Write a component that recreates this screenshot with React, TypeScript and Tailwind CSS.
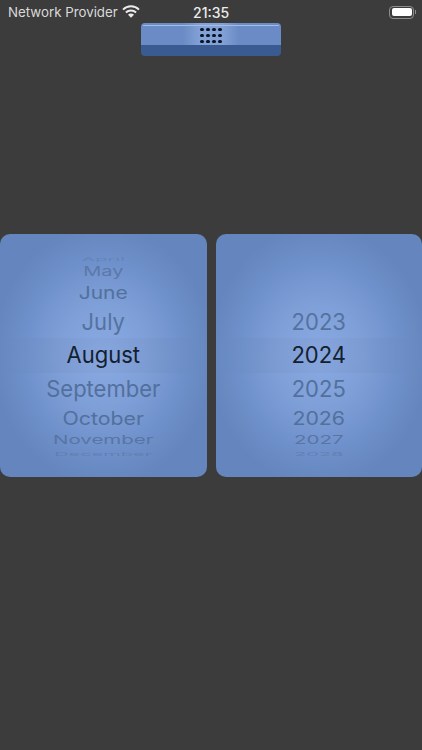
import React from "react";

function Row({ h, cls, children }: { h: string; cls: string; children: React.ReactNode }) {
  return (
    <div className={`${h} flex items-center justify-center overflow-hidden`}>
      <span className={`${cls} block leading-none whitespace-nowrap`}>{children}</span>
    </div>
  );
}

const glow =
  "bg-[radial-gradient(ellipse_110px_130px_at_center,#89aae2_0%,#7f9fd8_40%,#6f91cb_72%,#6485bd_100%)]";

function Wheel({ items }: { items: { h: string; cls: string; t: string }[] }) {
  return (
    <div className={`relative h-[243px] flex-1 rounded-[10px] ${glow} flex flex-col items-stretch pt-[21px]`}>
      <div className="absolute left-0 right-0 top-[104px] h-[35px] bg-[linear-gradient(90deg,transparent,rgba(0,0,0,0.025)_20%,rgba(0,0,0,0.025)_80%,transparent)]" />
      <div className="relative flex flex-col">
        {items.map((it, i) => (
          <Row key={i} h={it.h} cls={it.cls}>
            {it.t}
          </Row>
        ))}
      </div>
    </div>
  );
}

const months = [
  { h: "h-[7px]", cls: "text-[20px] scale-y-[0.25] text-[#55719f]/40", t: "April" },
  { h: "h-[17px]", cls: "text-[20px] scale-y-[0.66] text-[#55719f]/80", t: "May" },
  { h: "h-[26px]", cls: "text-[21px] scale-y-[0.82] text-[#52709c]", t: "June" },
  { h: "h-[33px]", cls: "text-[22px] scale-y-[1.03] text-[#55729f]", t: "July" },
  { h: "h-[34px]", cls: "text-[22px] scale-y-[1.03] text-[#14202f]", t: "August" },
  { h: "h-[34px]", cls: "text-[22px] scale-y-[1.03] text-[#52709c]", t: "September" },
  { h: "h-[25px]", cls: "text-[21.3px] scale-y-[0.85] text-[#52709c]", t: "October" },
  { h: "h-[19px]", cls: "text-[20.5px] scale-y-[0.58] text-[#55719f]/90", t: "November" },
  { h: "h-[7px]", cls: "text-[20px] scale-y-[0.25] text-[#55719f]/50", t: "December" },
];

const years = [
  { h: "h-[7px]", cls: "text-[22px] text-transparent", t: "" },
  { h: "h-[17px]", cls: "text-[18px] text-transparent", t: "" },
  { h: "h-[26px]", cls: "text-[20px] text-transparent", t: "" },
  { h: "h-[33px]", cls: "text-[22px] scale-y-[1.03] text-[#55729f]", t: "2023" },
  { h: "h-[34px]", cls: "text-[22px] scale-y-[1.03] text-[#14202f]", t: "2024" },
  { h: "h-[34px]", cls: "text-[22px] scale-y-[1.03] text-[#52709c]", t: "2025" },
  { h: "h-[25px]", cls: "text-[21.3px] scale-y-[0.85] text-[#52709c]", t: "2026" },
  { h: "h-[19px]", cls: "text-[20.5px] scale-y-[0.58] text-[#55719f]/90", t: "2027" },
  { h: "h-[7px]", cls: "text-[20px] scale-y-[0.25] text-[#55719f]/50", t: "2028" },
];

function Wifi() {
  return (
    <svg width="18" height="13" viewBox="0 0 18 13" fill="none" className="ml-[4px] mb-[1px]">
      <path d="M1 4.6 A11.5 11.5 0 0 1 17 4.6" stroke="#ebebeb" strokeWidth="2" />
      <path d="M3.9 7.5 A7.4 7.4 0 0 1 14.1 7.5" stroke="#ebebeb" strokeWidth="2" />
      <path d="M9 12.8 L6 9.7 A4.2 4.2 0 0 1 12 9.7 Z" fill="#ebebeb" />
    </svg>
  );
}

export default function App() {
  return (
    <div className="h-[750px] w-[422px] overflow-hidden bg-[#3c3c3c] font-['Inter','Liberation_Sans',sans-serif]">
      <div className="flex h-[23px] items-center pt-[1px]">
        <div className="flex w-[193px] items-center pl-[8px]">
          <span className="mt-[1px] text-[13.3px] text-[#d9d9d9]">Network Provider</span>
          <Wifi />
        </div>
        <span className="text-[14px] font-medium text-[#ececec]">21:35</span>
        <div className="ml-auto mr-[6px] flex items-center">
          <div className="h-[13px] w-[25px] rounded-[4px] border border-[#8d8d8d] p-[1.5px]">
            <div className="h-full w-full rounded-[2px] bg-white" />
          </div>
          <div className="ml-[1px] h-[4px] w-[1px] bg-[#8d8d8d]" />
        </div>
      </div>

      <div className="mx-auto flex h-[33px] w-[140px] flex-col overflow-hidden rounded-[4px]">
        <div className="relative flex h-[22px] items-center justify-center bg-[#6a8bc5]">
          <div className="absolute left-[42px] top-0 h-full w-[56px] bg-[linear-gradient(90deg,#6a8bc5,#82a1d6_30%,#82a1d6_70%,#6a8bc5)]" />
          <div className="absolute left-[2px] right-[2px] top-[2px] h-[1px] bg-[#a5bde2]" />
          <div className="relative mt-[3px] grid grid-cols-4 gap-x-[2.5px] gap-y-[2.5px]">
            {Array.from({ length: 12 }).map((_, i) => (
              <div key={i} className="h-[3.5px] w-[3.5px] rounded-[1.5px] bg-[#0c1626]" />
            ))}
          </div>
        </div>
        <div className="flex-1 bg-[#3a5a92]" />
      </div>

      <div className="mt-[178px] flex gap-[9px]">
        <Wheel items={months} />
        <Wheel items={years} />
      </div>
    </div>
  );
}
